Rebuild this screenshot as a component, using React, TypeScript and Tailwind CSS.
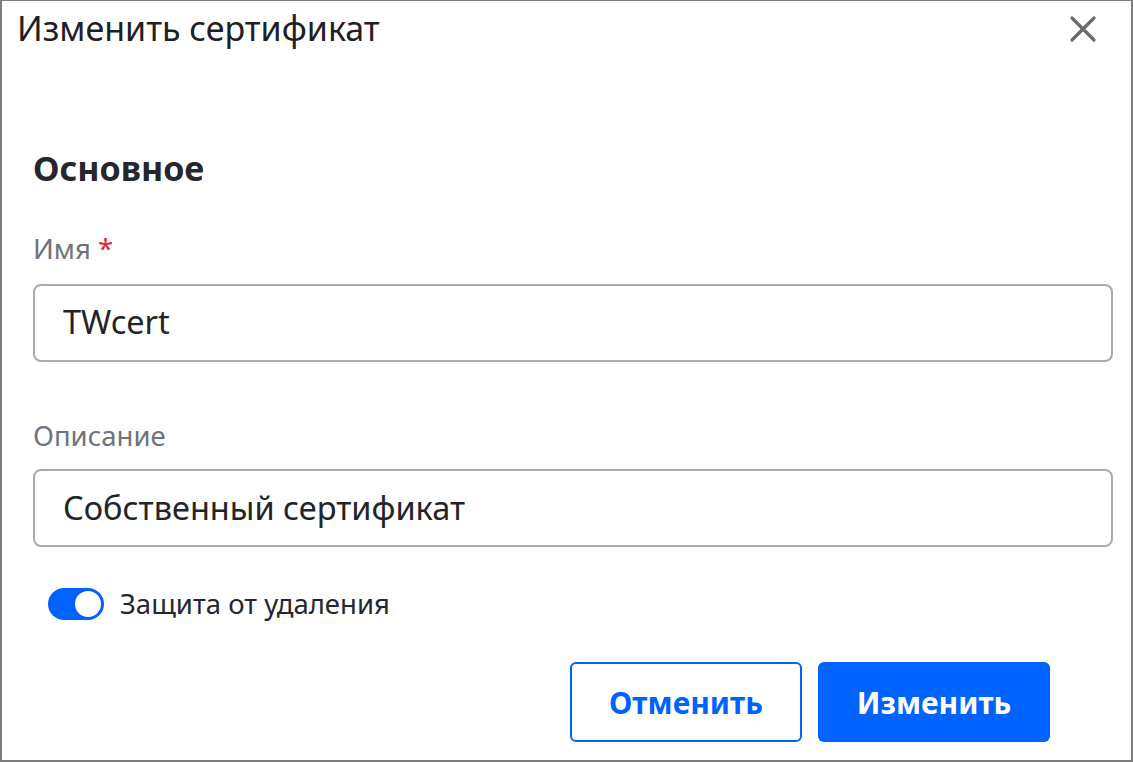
import React from "react";

export default function App() {
  const font = { fontFamily: '"Noto Sans", "Open Sans", sans-serif' };
  return (
    <div
      style={font}
      className="w-[1133px] h-[762px] bg-white border-t border-x-2 border-b-2 border-[#7d7d7d] flex flex-col text-[#222428]"
    >
      <div className="flex items-center justify-between pl-[15px] pr-[34px] pt-[10px]">
        <h1 className="text-[34px] leading-none font-normal text-[#1f2023]">Изменить сертификат</h1>
        <button className="w-[28px] h-[28px] flex items-center justify-center text-[#6b6b6b] mt-[2px]">
          <svg width="28" height="28" viewBox="0 0 28 28" fill="none" stroke="currentColor" strokeWidth="3.2" strokeLinecap="round">
            <path d="M3 3 L25 25 M25 3 L3 25" />
          </svg>
        </button>
      </div>
      <div className="flex flex-col pl-[31px] pr-[18px] pt-[106px]">
        <h2 className="text-[34px] leading-none font-bold text-[#25272c] mb-[50px]">Основное</h2>
        <label className="text-[27.5px] leading-none text-[#6f737b] mb-[21px]">
          Имя <span className="text-[#e5262e]">*</span>
        </label>
        <div className="h-[78px] rounded-[8px] border-2 border-[#a7aab1] flex items-center pl-[28px] text-[32.5px] text-[#222428] mb-[60px]">
          TWcert
        </div>
        <label className="text-[27.5px] leading-none text-[#6f737b] mb-[20px]">Описание</label>
        <div className="h-[78px] rounded-[8px] border-2 border-[#a7aab1] flex items-center pl-[28px] text-[32.5px] text-[#222428] mb-[41px]">
          Собственный сертификат
        </div>
        <div className="flex items-center gap-[16px] pl-[15px] mb-[42px]">
          <div className="w-[56px] h-[32px] rounded-full bg-[#0062ff] flex items-center justify-end pr-[3px]">
            <div className="w-[26px] h-[26px] rounded-full bg-white" />
          </div>
          <span className="text-[27.5px] leading-none text-[#25272c]">Защита от удаления</span>
        </div>
        <div className="flex justify-end gap-[16px] pr-[63px]">
          <button className="w-[232px] h-[80px] rounded-[6px] border-2 border-[#0062ff] text-[#0062ff] text-[30px] font-bold bg-white">
            Отменить
          </button>
          <button className="w-[232px] h-[80px] rounded-[6px] bg-[#0062ff] text-white text-[30px] font-bold">
            Изменить
          </button>
        </div>
      </div>
    </div>
  );
}
